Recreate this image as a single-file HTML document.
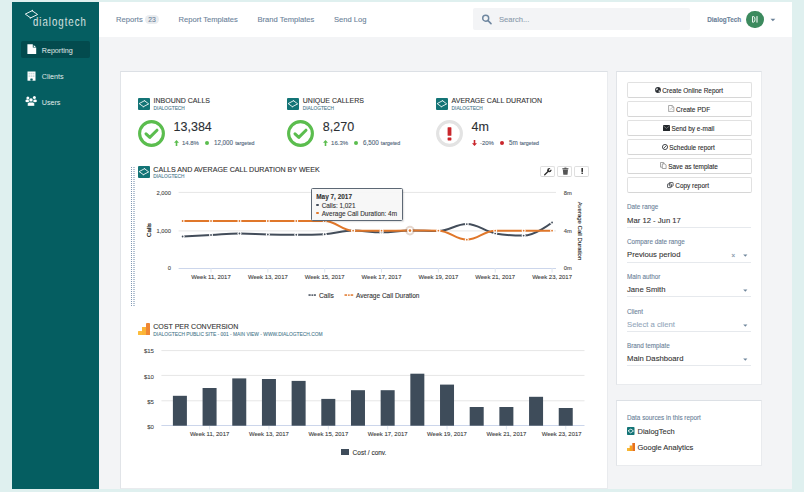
<!DOCTYPE html>
<html><head><meta charset="utf-8"><style>
html,body{margin:0;padding:0;}
body{width:804px;height:492px;overflow:hidden;position:relative;background:#dff0ef;font-family:"Liberation Sans", sans-serif;}
.t{position:absolute;white-space:nowrap;line-height:1;-webkit-text-stroke:0.1px currentColor;}
.r{position:absolute;}
</style></head><body>
<div class="r" style="left:12px;top:2px;width:780px;height:487px;background:#f3f4f6;"></div><div class="r" style="left:12px;top:2px;width:87px;height:487px;background:#055e61;"></div><svg class="r" style="left:24px;top:8px;" width="16" height="12" viewBox="0 0 16 12"><path d="M1.3 6.1 L8.1 2.7 L13.6 6.5 L6.6 9.9 Z" fill="none" stroke="#fff" stroke-width="0.9" stroke-linejoin="round"/><path d="M7.4 3.1 L8.9 1.5 L9.0 3.3 Z M7.3 9.5 L5.9 11 L5.8 9.3 Z" fill="#fff"/></svg><div class="t" style="left:33.4px;top:15.6px;font-size:12.3px;color:#fff;letter-spacing:1.3px;-webkit-text-stroke:0.2px #055e61;transform:scaleX(0.78);transform-origin:0 0;">dialogtech</div><div class="r" style="left:21px;top:41px;width:69px;height:17px;background:#034b4e;border-radius:2px;"></div><svg class="r" style="left:26.5px;top:44px;" width="10" height="11" viewBox="0 0 10 11"><path d="M0.4 0.3 H5.8 V3.6 H9.2 V10.1 H0.4 Z" fill="#fff"/><path d="M6.7 0.9 L8.8 3.0 H6.7 Z" fill="#fff"/></svg><div class="t" style="left:41.70px;top:47.00px;font-size:7.2px;color:#fff;font-weight:normal;-webkit-text-stroke:0.12px #055e61;">Reporting</div><svg class="r" style="left:27px;top:70.5px;" width="9" height="10" viewBox="0 0 9 10"><rect x="0.5" y="0.5" width="8" height="9.2" fill="#fff"/><rect x="1.6" y="1.8" width="1.6" height="1.6" fill="#055e61" opacity="0.22"/><rect x="3.7" y="1.8" width="1.6" height="1.6" fill="#055e61" opacity="0.22"/><rect x="5.8" y="1.8" width="1.6" height="1.6" fill="#055e61" opacity="0.22"/><rect x="1.6" y="4.3" width="1.6" height="1.6" fill="#055e61" opacity="0.22"/><rect x="3.7" y="4.3" width="1.6" height="1.6" fill="#055e61" opacity="0.22"/><rect x="5.8" y="4.3" width="1.6" height="1.6" fill="#055e61" opacity="0.22"/><rect x="3.3" y="7.4" width="2.4" height="2.3" rx="0.6" fill="#055e61"/></svg><div class="t" style="left:41.70px;top:73.00px;font-size:7.2px;color:#fff;font-weight:normal;-webkit-text-stroke:0.12px #055e61;">Clients</div><svg class="r" style="left:24px;top:95px;" width="14" height="12" viewBox="0 0 14 12"><circle cx="3.9" cy="2.9" r="1.5" fill="#fff"/><circle cx="10.4" cy="2.6" r="1.5" fill="#fff"/><ellipse cx="3.3" cy="5.9" rx="1.9" ry="1.4" fill="#fff"/><ellipse cx="11.0" cy="5.9" rx="1.9" ry="1.4" fill="#fff"/><circle cx="7.0" cy="4.9" r="2.0" fill="#fff" stroke="#055e61" stroke-width="0.5"/><path d="M3.6 11.1 V8.7 Q3.6 7.2 5.2 7.2 H8.8 Q10.4 7.2 10.4 8.7 V11.1 Z" fill="#fff" stroke="#055e61" stroke-width="0.4"/></svg><div class="t" style="left:41.70px;top:99.00px;font-size:7.2px;color:#fff;font-weight:normal;-webkit-text-stroke:0.12px #055e61;">Users</div><div class="r" style="left:99px;top:2px;width:693px;height:35px;background:#fff;"></div><div class="t" style="left:116.10px;top:16.00px;font-size:7.6px;color:#6b8299;font-weight:normal;">Reports</div><div class="r" style="left:144.8px;top:15.3px;width:14.2px;height:9.2px;background:#e9ecef;border-radius:5px;"></div><div class="t" style="left:142.00px;width:20px;text-align:center;top:17.00px;font-size:6.8px;color:#6b8299;font-weight:normal;">23</div><div class="t" style="left:178.50px;top:16.00px;font-size:7.6px;color:#6b8299;font-weight:normal;">Report Templates</div><div class="t" style="left:257.50px;top:16.00px;font-size:7.6px;color:#6b8299;font-weight:normal;">Brand Templates</div><div class="t" style="left:334.00px;top:16.00px;font-size:7.6px;color:#6b8299;font-weight:normal;">Send Log</div><div class="r" style="left:473px;top:8px;width:217px;height:22px;background:#f3f4f6;border-radius:2px;"></div><svg class="r" style="left:481px;top:14px;" width="12" height="11" viewBox="0 0 12 11"><circle cx="4.7" cy="4.2" r="3.0" fill="none" stroke="#6f87a0" stroke-width="1.45"/><path d="M7.0 6.6 L10.0 9.6" stroke="#6f87a0" stroke-width="1.6" stroke-linecap="round"/></svg><div class="t" style="left:498.90px;top:16.00px;font-size:7.6px;color:#8a9bac;font-weight:normal;">Search...</div><div class="t" style="left:707.20px;top:17.00px;font-size:6.4px;color:#6b8299;font-weight:bold;">DialogTech</div><div class="r" style="left:746.3px;top:10.5px;width:17.6px;height:17.6px;background:#3c8a5e;border-radius:50%;"></div><svg class="r" style="left:750px;top:14px;" width="10" height="10" viewBox="0 0 10 10"><path d="M2.55 2.5 V8.2 H3.4 Q5.0 8.2 5.0 5.35 Q5.0 2.5 3.4 2.5 Z" fill="none" stroke="#fff" stroke-width="0.95"/><rect x="6.3" y="2.1" width="1.4" height="6.5" fill="#fff" opacity="0.75"/></svg><svg class="r" style="left:769.5px;top:17.5px;" width="6" height="4" viewBox="0 0 6 4"><path d="M0.5 0.8 H5.3 L2.9 3.3 Z" fill="#6b8299"/></svg><div class="r" style="left:120px;top:71px;width:488px;height:418px;background:#fff;border:1px solid #e9ebee;border-top-color:#dce0e5;border-left-color:#e1e4e8;box-sizing:border-box;"></div><svg class="r" style="left:138px;top:98px;" width="12" height="12" viewBox="0 0 12 12"><rect x="0" y="0" width="12" height="12" rx="1" fill="#137476"/><path d="M1.15 5.6 L6.5 2.7 L10.7 5.9 L5.4 8.7 Z" fill="none" stroke="#fff" stroke-width="0.85" stroke-linejoin="round"/><path d="M5.9 2.2 L7.3 2.4 L6.6 3.4 Z M4.7 9.3 L6.1 9.1 L5.3 8.2 Z" fill="#fff"/></svg><div class="t" style="left:153.60px;top:97.00px;font-size:7px;color:#333;font-weight:normal;">INBOUND CALLS</div><div class="t" style="left:153.60px;top:107.00px;font-size:4.8px;color:#4f7d91;font-weight:normal;">DIALOGTECH</div><svg class="r" style="left:138px;top:119.9px;" width="27" height="27" viewBox="0 0 27 27"><circle cx="13.5" cy="13.5" r="11.9" fill="none" stroke="#5bbd4e" stroke-width="3.1"/><path d="M8 13.8 L11.8 17.4 L19 10.2" fill="none" stroke="#5bbd4e" stroke-width="3" stroke-linecap="round" stroke-linejoin="round"/></svg><svg class="r" style="left:174.2px;top:140.2px;" width="5" height="6" viewBox="0 0 5 6"><path d="M2.5 0 L5 2.8 H3.3 V6 H1.7 V2.8 H0 Z" fill="#5bbd4e"/></svg><div class="t" style="left:173.60px;top:121.00px;font-size:12.5px;color:#2b2f33;font-weight:normal;">13,384</div><div class="t" style="left:181.90px;top:140.00px;font-size:6px;color:#4f6579;font-weight:normal;">14.8%</div><div class="r" style="left:205.1140625px;top:141.1px;width:4px;height:4px;background:#5bbd4e;border-radius:50%;"></div><div class="t" style="left:213.91px;top:140.00px;font-size:6.28px;color:#4f6579;font-weight:normal;">12,000</div><div class="t" style="left:235.13px;top:141.00px;font-size:5.3px;color:#4f6579;font-weight:normal;">targeted</div><svg class="r" style="left:287.2px;top:98px;" width="12" height="12" viewBox="0 0 12 12"><rect x="0" y="0" width="12" height="12" rx="1" fill="#137476"/><path d="M1.15 5.6 L6.5 2.7 L10.7 5.9 L5.4 8.7 Z" fill="none" stroke="#fff" stroke-width="0.85" stroke-linejoin="round"/><path d="M5.9 2.2 L7.3 2.4 L6.6 3.4 Z M4.7 9.3 L6.1 9.1 L5.3 8.2 Z" fill="#fff"/></svg><div class="t" style="left:302.80px;top:97.00px;font-size:7px;color:#333;font-weight:normal;">UNIQUE CALLERS</div><div class="t" style="left:302.80px;top:107.00px;font-size:4.8px;color:#4f7d91;font-weight:normal;">DIALOGTECH</div><svg class="r" style="left:287.2px;top:119.9px;" width="27" height="27" viewBox="0 0 27 27"><circle cx="13.5" cy="13.5" r="11.9" fill="none" stroke="#5bbd4e" stroke-width="3.1"/><path d="M8 13.8 L11.8 17.4 L19 10.2" fill="none" stroke="#5bbd4e" stroke-width="3" stroke-linecap="round" stroke-linejoin="round"/></svg><svg class="r" style="left:323.4px;top:140.2px;" width="5" height="6" viewBox="0 0 5 6"><path d="M2.5 0 L5 2.8 H3.3 V6 H1.7 V2.8 H0 Z" fill="#5bbd4e"/></svg><div class="t" style="left:322.80px;top:121.00px;font-size:12.5px;color:#2b2f33;font-weight:normal;">8,270</div><div class="t" style="left:331.10px;top:140.00px;font-size:6px;color:#4f6579;font-weight:normal;">16.3%</div><div class="r" style="left:354.3140625px;top:141.1px;width:4px;height:4px;background:#5bbd4e;border-radius:50%;"></div><div class="t" style="left:363.11px;top:140.00px;font-size:6.28px;color:#4f6579;font-weight:normal;">6,500</div><div class="t" style="left:380.83px;top:141.00px;font-size:5.3px;color:#4f6579;font-weight:normal;">targeted</div><svg class="r" style="left:436px;top:98px;" width="12" height="12" viewBox="0 0 12 12"><rect x="0" y="0" width="12" height="12" rx="1" fill="#137476"/><path d="M1.15 5.6 L6.5 2.7 L10.7 5.9 L5.4 8.7 Z" fill="none" stroke="#fff" stroke-width="0.85" stroke-linejoin="round"/><path d="M5.9 2.2 L7.3 2.4 L6.6 3.4 Z M4.7 9.3 L6.1 9.1 L5.3 8.2 Z" fill="#fff"/></svg><div class="t" style="left:451.60px;top:97.00px;font-size:7px;color:#333;font-weight:normal;">AVERAGE CALL DURATION</div><div class="t" style="left:451.60px;top:107.00px;font-size:4.8px;color:#4f7d91;font-weight:normal;">DIALOGTECH</div><svg class="r" style="left:436px;top:119.9px;" width="27" height="27" viewBox="0 0 27 27"><circle cx="13.5" cy="13.5" r="11.9" fill="none" stroke="#e3e3e3" stroke-width="3.1"/><rect x="11.6" y="7.2" width="3.8" height="8.6" rx="0.6" fill="#c9262c"/><rect x="11.6" y="17.4" width="3.8" height="3" rx="0.6" fill="#c9262c"/></svg><svg class="r" style="left:472.2px;top:140.2px;" width="5" height="6" viewBox="0 0 5 6"><path d="M2.5 6 L5 3.2 H3.3 V0 H1.7 V3.2 H0 Z" fill="#c9262c"/></svg><div class="t" style="left:471.60px;top:121.00px;font-size:12.5px;color:#2b2f33;font-weight:normal;">4m</div><div class="t" style="left:479.90px;top:140.00px;font-size:6px;color:#4f6579;font-weight:normal;">-20%</div><div class="r" style="left:500.10781249999997px;top:141.1px;width:4px;height:4px;background:#c9262c;border-radius:50%;"></div><div class="t" style="left:508.91px;top:140.00px;font-size:6.28px;color:#4f6579;font-weight:normal;">5m</div><div class="t" style="left:519.63px;top:141.00px;font-size:5.3px;color:#4f6579;font-weight:normal;">targeted</div><svg class="r" style="left:131px;top:167px;" width="5" height="141" viewBox="0 0 5 141"><rect x="0" y="0" width="1" height="1" fill="#8098b3"/><rect x="2" y="0" width="2" height="1" fill="#b4c3d3"/><rect x="0" y="2" width="1" height="1" fill="#8098b3"/><rect x="2" y="2" width="2" height="1" fill="#b4c3d3"/><rect x="0" y="4" width="1" height="1" fill="#8098b3"/><rect x="2" y="4" width="2" height="1" fill="#b4c3d3"/><rect x="0" y="6" width="1" height="1" fill="#8098b3"/><rect x="2" y="6" width="2" height="1" fill="#b4c3d3"/><rect x="0" y="8" width="1" height="1" fill="#8098b3"/><rect x="2" y="8" width="2" height="1" fill="#b4c3d3"/><rect x="0" y="10" width="1" height="1" fill="#8098b3"/><rect x="2" y="10" width="2" height="1" fill="#b4c3d3"/><rect x="0" y="12" width="1" height="1" fill="#8098b3"/><rect x="2" y="12" width="2" height="1" fill="#b4c3d3"/><rect x="0" y="14" width="1" height="1" fill="#8098b3"/><rect x="2" y="14" width="2" height="1" fill="#b4c3d3"/><rect x="0" y="16" width="1" height="1" fill="#8098b3"/><rect x="2" y="16" width="2" height="1" fill="#b4c3d3"/><rect x="0" y="18" width="1" height="1" fill="#8098b3"/><rect x="2" y="18" width="2" height="1" fill="#b4c3d3"/><rect x="0" y="20" width="1" height="1" fill="#8098b3"/><rect x="2" y="20" width="2" height="1" fill="#b4c3d3"/><rect x="0" y="22" width="1" height="1" fill="#8098b3"/><rect x="2" y="22" width="2" height="1" fill="#b4c3d3"/><rect x="0" y="24" width="1" height="1" fill="#8098b3"/><rect x="2" y="24" width="2" height="1" fill="#b4c3d3"/><rect x="0" y="26" width="1" height="1" fill="#8098b3"/><rect x="2" y="26" width="2" height="1" fill="#b4c3d3"/><rect x="0" y="28" width="1" height="1" fill="#8098b3"/><rect x="2" y="28" width="2" height="1" fill="#b4c3d3"/><rect x="0" y="30" width="1" height="1" fill="#8098b3"/><rect x="2" y="30" width="2" height="1" fill="#b4c3d3"/><rect x="0" y="32" width="1" height="1" fill="#8098b3"/><rect x="2" y="32" width="2" height="1" fill="#b4c3d3"/><rect x="0" y="34" width="1" height="1" fill="#8098b3"/><rect x="2" y="34" width="2" height="1" fill="#b4c3d3"/><rect x="0" y="36" width="1" height="1" fill="#8098b3"/><rect x="2" y="36" width="2" height="1" fill="#b4c3d3"/><rect x="0" y="38" width="1" height="1" fill="#8098b3"/><rect x="2" y="38" width="2" height="1" fill="#b4c3d3"/><rect x="0" y="40" width="1" height="1" fill="#8098b3"/><rect x="2" y="40" width="2" height="1" fill="#b4c3d3"/><rect x="0" y="42" width="1" height="1" fill="#8098b3"/><rect x="2" y="42" width="2" height="1" fill="#b4c3d3"/><rect x="0" y="44" width="1" height="1" fill="#8098b3"/><rect x="2" y="44" width="2" height="1" fill="#b4c3d3"/><rect x="0" y="46" width="1" height="1" fill="#8098b3"/><rect x="2" y="46" width="2" height="1" fill="#b4c3d3"/><rect x="0" y="48" width="1" height="1" fill="#8098b3"/><rect x="2" y="48" width="2" height="1" fill="#b4c3d3"/><rect x="0" y="50" width="1" height="1" fill="#8098b3"/><rect x="2" y="50" width="2" height="1" fill="#b4c3d3"/><rect x="0" y="52" width="1" height="1" fill="#8098b3"/><rect x="2" y="52" width="2" height="1" fill="#b4c3d3"/><rect x="0" y="54" width="1" height="1" fill="#8098b3"/><rect x="2" y="54" width="2" height="1" fill="#b4c3d3"/><rect x="0" y="56" width="1" height="1" fill="#8098b3"/><rect x="2" y="56" width="2" height="1" fill="#b4c3d3"/><rect x="0" y="58" width="1" height="1" fill="#8098b3"/><rect x="2" y="58" width="2" height="1" fill="#b4c3d3"/><rect x="0" y="60" width="1" height="1" fill="#8098b3"/><rect x="2" y="60" width="2" height="1" fill="#b4c3d3"/><rect x="0" y="62" width="1" height="1" fill="#8098b3"/><rect x="2" y="62" width="2" height="1" fill="#b4c3d3"/><rect x="0" y="64" width="1" height="1" fill="#8098b3"/><rect x="2" y="64" width="2" height="1" fill="#b4c3d3"/><rect x="0" y="66" width="1" height="1" fill="#8098b3"/><rect x="2" y="66" width="2" height="1" fill="#b4c3d3"/><rect x="0" y="68" width="1" height="1" fill="#8098b3"/><rect x="2" y="68" width="2" height="1" fill="#b4c3d3"/><rect x="0" y="70" width="1" height="1" fill="#8098b3"/><rect x="2" y="70" width="2" height="1" fill="#b4c3d3"/><rect x="0" y="72" width="1" height="1" fill="#8098b3"/><rect x="2" y="72" width="2" height="1" fill="#b4c3d3"/><rect x="0" y="74" width="1" height="1" fill="#8098b3"/><rect x="2" y="74" width="2" height="1" fill="#b4c3d3"/><rect x="0" y="76" width="1" height="1" fill="#8098b3"/><rect x="2" y="76" width="2" height="1" fill="#b4c3d3"/><rect x="0" y="78" width="1" height="1" fill="#8098b3"/><rect x="2" y="78" width="2" height="1" fill="#b4c3d3"/><rect x="0" y="80" width="1" height="1" fill="#8098b3"/><rect x="2" y="80" width="2" height="1" fill="#b4c3d3"/><rect x="0" y="82" width="1" height="1" fill="#8098b3"/><rect x="2" y="82" width="2" height="1" fill="#b4c3d3"/><rect x="0" y="84" width="1" height="1" fill="#8098b3"/><rect x="2" y="84" width="2" height="1" fill="#b4c3d3"/><rect x="0" y="86" width="1" height="1" fill="#8098b3"/><rect x="2" y="86" width="2" height="1" fill="#b4c3d3"/><rect x="0" y="88" width="1" height="1" fill="#8098b3"/><rect x="2" y="88" width="2" height="1" fill="#b4c3d3"/><rect x="0" y="90" width="1" height="1" fill="#8098b3"/><rect x="2" y="90" width="2" height="1" fill="#b4c3d3"/><rect x="0" y="92" width="1" height="1" fill="#8098b3"/><rect x="2" y="92" width="2" height="1" fill="#b4c3d3"/><rect x="0" y="94" width="1" height="1" fill="#8098b3"/><rect x="2" y="94" width="2" height="1" fill="#b4c3d3"/><rect x="0" y="96" width="1" height="1" fill="#8098b3"/><rect x="2" y="96" width="2" height="1" fill="#b4c3d3"/><rect x="0" y="98" width="1" height="1" fill="#8098b3"/><rect x="2" y="98" width="2" height="1" fill="#b4c3d3"/><rect x="0" y="100" width="1" height="1" fill="#8098b3"/><rect x="2" y="100" width="2" height="1" fill="#b4c3d3"/><rect x="0" y="102" width="1" height="1" fill="#8098b3"/><rect x="2" y="102" width="2" height="1" fill="#b4c3d3"/><rect x="0" y="104" width="1" height="1" fill="#8098b3"/><rect x="2" y="104" width="2" height="1" fill="#b4c3d3"/><rect x="0" y="106" width="1" height="1" fill="#8098b3"/><rect x="2" y="106" width="2" height="1" fill="#b4c3d3"/><rect x="0" y="108" width="1" height="1" fill="#8098b3"/><rect x="2" y="108" width="2" height="1" fill="#b4c3d3"/><rect x="0" y="110" width="1" height="1" fill="#8098b3"/><rect x="2" y="110" width="2" height="1" fill="#b4c3d3"/><rect x="0" y="112" width="1" height="1" fill="#8098b3"/><rect x="2" y="112" width="2" height="1" fill="#b4c3d3"/><rect x="0" y="114" width="1" height="1" fill="#8098b3"/><rect x="2" y="114" width="2" height="1" fill="#b4c3d3"/><rect x="0" y="116" width="1" height="1" fill="#8098b3"/><rect x="2" y="116" width="2" height="1" fill="#b4c3d3"/><rect x="0" y="118" width="1" height="1" fill="#8098b3"/><rect x="2" y="118" width="2" height="1" fill="#b4c3d3"/><rect x="0" y="120" width="1" height="1" fill="#8098b3"/><rect x="2" y="120" width="2" height="1" fill="#b4c3d3"/><rect x="0" y="122" width="1" height="1" fill="#8098b3"/><rect x="2" y="122" width="2" height="1" fill="#b4c3d3"/><rect x="0" y="124" width="1" height="1" fill="#8098b3"/><rect x="2" y="124" width="2" height="1" fill="#b4c3d3"/><rect x="0" y="126" width="1" height="1" fill="#8098b3"/><rect x="2" y="126" width="2" height="1" fill="#b4c3d3"/><rect x="0" y="128" width="1" height="1" fill="#8098b3"/><rect x="2" y="128" width="2" height="1" fill="#b4c3d3"/><rect x="0" y="130" width="1" height="1" fill="#8098b3"/><rect x="2" y="130" width="2" height="1" fill="#b4c3d3"/><rect x="0" y="132" width="1" height="1" fill="#8098b3"/><rect x="2" y="132" width="2" height="1" fill="#b4c3d3"/><rect x="0" y="134" width="1" height="1" fill="#8098b3"/><rect x="2" y="134" width="2" height="1" fill="#b4c3d3"/><rect x="0" y="136" width="1" height="1" fill="#8098b3"/><rect x="2" y="136" width="2" height="1" fill="#b4c3d3"/><rect x="0" y="138" width="1" height="1" fill="#8098b3"/><rect x="2" y="138" width="2" height="1" fill="#b4c3d3"/></svg><svg class="r" style="left:138.2px;top:166px;" width="12" height="12" viewBox="0 0 12 12"><rect x="0" y="0" width="12" height="12" rx="1" fill="#137476"/><path d="M1.15 5.6 L6.5 2.7 L10.7 5.9 L5.4 8.7 Z" fill="none" stroke="#fff" stroke-width="0.85" stroke-linejoin="round"/><path d="M5.9 2.2 L7.3 2.4 L6.6 3.4 Z M4.7 9.3 L6.1 9.1 L5.3 8.2 Z" fill="#fff"/></svg><div class="t" style="left:153.30px;top:167.00px;font-size:7.1px;color:#333;font-weight:normal;">CALLS AND AVERAGE CALL DURATION BY WEEK</div><div class="t" style="left:153.30px;top:175.00px;font-size:4.8px;color:#4f7d91;font-weight:normal;">DIALOGTECH</div><div class="r" style="left:540px;top:166px;width:15px;height:11px;background:#fff;border:1px solid #e0e0e0;border-bottom-color:#d8d8d8;border-radius:2px;box-sizing:border-box;"></div><div class="r" style="left:557px;top:166px;width:15px;height:11px;background:#fff;border:1px solid #e0e0e0;border-bottom-color:#d8d8d8;border-radius:2px;box-sizing:border-box;"></div><div class="r" style="left:574px;top:166px;width:15px;height:11px;background:#fff;border:1px solid #e0e0e0;border-bottom-color:#d8d8d8;border-radius:2px;box-sizing:border-box;"></div><svg class="r" style="left:543px;top:167px;" width="10" height="9" viewBox="0 0 10 9"><path d="M1.7 7.8 L5.3 4.2" stroke="#2e2e2e" stroke-width="1.3" stroke-linecap="round"/><circle cx="6.3" cy="3.2" r="2.1" fill="#2e2e2e"/><path d="M6.5 3.0 L8.9 0.6" stroke="#fff" stroke-width="1.3" stroke-linecap="round"/></svg><svg class="r" style="left:560.5px;top:167px;" width="9" height="9" viewBox="0 0 9 9"><rect x="1.3" y="1.2" width="6.2" height="1.1" rx="0.4" fill="#444"/><rect x="3.4" y="0.6" width="2" height="0.9" fill="#444"/><path d="M1.8 2.6 H7.0 L6.5 7.7 H2.3 Z" fill="#555"/></svg><svg class="r" style="left:578px;top:167px;" width="9" height="9" viewBox="0 0 9 9"><rect x="3.4" y="1.0" width="1.6" height="3.9" fill="#333"/><rect x="3.4" y="5.6" width="1.6" height="1.3" fill="#333"/></svg><svg class="r" style="left:0;top:0" width="804" height="492"><rect x="178.6" y="191.9" width="377.4" height="1" fill="#e6e6e6"/><rect x="178.6" y="230.4" width="377.4" height="1" fill="#e6e6e6"/><rect x="178.6" y="268" width="377.4" height="1" fill="#ccd6eb"/><rect x="210.52" y="268" width="1" height="4.5" fill="#dde5ef"/><rect x="267.36" y="268" width="1" height="4.5" fill="#dde5ef"/><rect x="324.20" y="268" width="1" height="4.5" fill="#dde5ef"/><rect x="381.04" y="268" width="1" height="4.5" fill="#dde5ef"/><rect x="437.88" y="268" width="1" height="4.5" fill="#dde5ef"/><rect x="494.72" y="268" width="1" height="4.5" fill="#dde5ef"/><rect x="551.56" y="268" width="1" height="4.5" fill="#dde5ef"/><path d="M 182.60 236.50 C 182.60 236.50 199.65 235.60 211.02 235.00 C 222.39 234.40 228.07 233.50 239.44 233.50 C 250.81 233.50 256.49 234.25 267.86 234.50 C 279.23 234.75 284.91 234.75 296.28 234.75 C 307.65 234.75 313.33 234.75 324.70 234.25 C 336.07 233.75 341.75 230.50 353.12 230.50 C 364.49 230.50 370.17 232.30 381.54 232.30 C 392.91 232.30 398.59 230.50 409.96 230.50 C 421.33 230.50 427.01 231.00 438.38 231.00 C 449.75 231.00 455.43 224.10 466.80 224.10 C 478.17 224.10 483.85 231.20 495.22 233.40 C 506.59 235.60 512.27 235.60 523.64 235.60 C 535.01 235.60 552.06 222.50 552.06 222.50" fill="none" stroke="#434d5a" stroke-width="2"/><path d="M 182.60 221.00 C 182.60 221.00 199.65 221.00 211.02 221.00 C 222.39 221.00 228.07 221.00 239.44 221.00 C 250.81 221.00 256.49 221.00 267.86 221.00 C 279.23 221.00 284.91 221.00 296.28 221.00 C 307.65 221.00 313.33 221.00 324.70 221.00 C 336.07 221.00 341.75 230.70 353.12 230.70 C 364.49 230.70 370.17 230.70 381.54 230.70 C 392.91 230.70 398.59 230.60 409.96 230.60 C 421.33 230.60 427.01 230.60 438.38 230.70 C 449.75 230.80 455.43 239.70 466.80 239.70 C 478.17 239.70 483.85 230.70 495.22 230.70 C 506.59 230.70 512.27 230.70 523.64 230.70 C 535.01 230.70 552.06 230.70 552.06 230.70" fill="none" stroke="#e0772a" stroke-width="2"/><circle cx="182.60" cy="236.50" r="2" fill="#fff"/><circle cx="182.60" cy="236.50" r="0.9" fill="#434d5a"/><circle cx="211.02" cy="235.00" r="2" fill="#fff"/><circle cx="211.02" cy="235.00" r="0.9" fill="#434d5a"/><circle cx="239.44" cy="233.50" r="2" fill="#fff"/><circle cx="239.44" cy="233.50" r="0.9" fill="#434d5a"/><circle cx="267.86" cy="234.50" r="2" fill="#fff"/><circle cx="267.86" cy="234.50" r="0.9" fill="#434d5a"/><circle cx="296.28" cy="234.75" r="2" fill="#fff"/><circle cx="296.28" cy="234.75" r="0.9" fill="#434d5a"/><circle cx="324.70" cy="234.25" r="2" fill="#fff"/><circle cx="324.70" cy="234.25" r="0.9" fill="#434d5a"/><circle cx="353.12" cy="230.50" r="2" fill="#fff"/><circle cx="353.12" cy="230.50" r="0.9" fill="#434d5a"/><circle cx="381.54" cy="232.30" r="2" fill="#fff"/><circle cx="381.54" cy="232.30" r="0.9" fill="#434d5a"/><circle cx="409.96" cy="230.50" r="2" fill="#fff"/><circle cx="409.96" cy="230.50" r="0.9" fill="#434d5a"/><circle cx="438.38" cy="231.00" r="2" fill="#fff"/><circle cx="438.38" cy="231.00" r="0.9" fill="#434d5a"/><circle cx="466.80" cy="224.10" r="2" fill="#fff"/><circle cx="466.80" cy="224.10" r="0.9" fill="#434d5a"/><circle cx="495.22" cy="233.40" r="2" fill="#fff"/><circle cx="495.22" cy="233.40" r="0.9" fill="#434d5a"/><circle cx="523.64" cy="235.60" r="2" fill="#fff"/><circle cx="523.64" cy="235.60" r="0.9" fill="#434d5a"/><circle cx="552.06" cy="222.50" r="2" fill="#fff"/><circle cx="552.06" cy="222.50" r="0.9" fill="#434d5a"/><circle cx="182.60" cy="221.00" r="2" fill="#fff"/><circle cx="182.60" cy="221.00" r="0.9" fill="#e0772a"/><circle cx="211.02" cy="221.00" r="2" fill="#fff"/><circle cx="211.02" cy="221.00" r="0.9" fill="#e0772a"/><circle cx="239.44" cy="221.00" r="2" fill="#fff"/><circle cx="239.44" cy="221.00" r="0.9" fill="#e0772a"/><circle cx="267.86" cy="221.00" r="2" fill="#fff"/><circle cx="267.86" cy="221.00" r="0.9" fill="#e0772a"/><circle cx="296.28" cy="221.00" r="2" fill="#fff"/><circle cx="296.28" cy="221.00" r="0.9" fill="#e0772a"/><circle cx="324.70" cy="221.00" r="2" fill="#fff"/><circle cx="324.70" cy="221.00" r="0.9" fill="#e0772a"/><circle cx="353.12" cy="230.70" r="2" fill="#fff"/><circle cx="353.12" cy="230.70" r="0.9" fill="#e0772a"/><circle cx="381.54" cy="230.70" r="2" fill="#fff"/><circle cx="381.54" cy="230.70" r="0.9" fill="#e0772a"/><circle cx="409.96" cy="230.60" r="2" fill="#fff"/><circle cx="409.96" cy="230.60" r="0.9" fill="#e0772a"/><circle cx="438.38" cy="230.70" r="2" fill="#fff"/><circle cx="438.38" cy="230.70" r="0.9" fill="#e0772a"/><circle cx="466.80" cy="239.70" r="2" fill="#fff"/><circle cx="466.80" cy="239.70" r="0.9" fill="#e0772a"/><circle cx="495.22" cy="230.70" r="2" fill="#fff"/><circle cx="495.22" cy="230.70" r="0.9" fill="#e0772a"/><circle cx="523.64" cy="230.70" r="2" fill="#fff"/><circle cx="523.64" cy="230.70" r="0.9" fill="#e0772a"/><circle cx="552.06" cy="230.70" r="2" fill="#fff"/><circle cx="552.06" cy="230.70" r="0.9" fill="#e0772a"/><circle cx="409.96" cy="230.6" r="4.8" fill="#a07050" opacity="0.28"/><circle cx="409.96" cy="230.6" r="2.8" fill="#fff"/><circle cx="409.96" cy="230.6" r="1.3" fill="#e0772a"/></svg><div class="t" style="left:131.00px;width:40px;text-align:right;top:191.00px;font-size:5.8px;color:#4a4a4a;font-weight:normal;">2,000</div><div class="t" style="left:131.00px;width:40px;text-align:right;top:229.00px;font-size:5.8px;color:#4a4a4a;font-weight:normal;">1,000</div><div class="t" style="left:131.00px;width:40px;text-align:right;top:266.00px;font-size:5.8px;color:#4a4a4a;font-weight:normal;">0</div><div class="t" style="left:563.70px;top:191.00px;font-size:5.8px;color:#4a4a4a;font-weight:normal;">8m</div><div class="t" style="left:563.70px;top:229.00px;font-size:5.8px;color:#4a4a4a;font-weight:normal;">4m</div><div class="t" style="left:563.70px;top:266.00px;font-size:5.8px;color:#4a4a4a;font-weight:normal;">0m</div><div class="t" style="left:119.6px;top:226.3px;width:60px;text-align:center;font-size:6.2px;color:#222;-webkit-text-stroke:0.2px #222;transform:rotate(-90deg);transform-origin:30px 4px;">Calls</div><div class="t" style="left:548.6px;top:226.5px;width:60px;text-align:center;font-size:6px;color:#222;transform:rotate(90deg);transform-origin:30px 4px;">Average Call Duration</div><div class="t" style="left:171.02px;width:80px;text-align:center;top:275.00px;font-size:5.95px;color:#3d3d3d;font-weight:normal;">Week 11, 2017</div><div class="t" style="left:227.86px;width:80px;text-align:center;top:275.00px;font-size:5.95px;color:#3d3d3d;font-weight:normal;">Week 13, 2017</div><div class="t" style="left:284.70px;width:80px;text-align:center;top:275.00px;font-size:5.95px;color:#3d3d3d;font-weight:normal;">Week 15, 2017</div><div class="t" style="left:341.54px;width:80px;text-align:center;top:275.00px;font-size:5.95px;color:#3d3d3d;font-weight:normal;">Week 17, 2017</div><div class="t" style="left:398.38px;width:80px;text-align:center;top:275.00px;font-size:5.95px;color:#3d3d3d;font-weight:normal;">Week 19, 2017</div><div class="t" style="left:455.22px;width:80px;text-align:center;top:275.00px;font-size:5.95px;color:#3d3d3d;font-weight:normal;">Week 21, 2017</div><div class="t" style="left:512.06px;width:80px;text-align:center;top:275.00px;font-size:5.95px;color:#3d3d3d;font-weight:normal;">Week 23, 2017</div><div class="r" style="left:311px;top:188px;width:92px;height:33px;background:rgba(247,247,247,0.95);border:1px solid #5d6875;border-radius:1.5px;box-sizing:border-box;box-shadow:1px 1px 1.5px rgba(0,0,0,0.12);"></div><div class="t" style="left:316.20px;top:194.00px;font-size:6.45px;color:#333;font-weight:bold;">May 7, 2017</div><div class="r" style="left:316.4px;top:203.6px;width:2.6px;height:2.6px;background:#434d5a;border-radius:50%;"></div><div class="t" style="left:321.70px;top:203.00px;font-size:6.4px;color:#333;font-weight:normal;">Calls: 1,021</div><div class="r" style="left:316.4px;top:211.8px;width:2.6px;height:2.6px;background:#e0772a;border-radius:50%;"></div><div class="t" style="left:321.70px;top:211.00px;font-size:6.45px;color:#333;font-weight:normal;">Average Call Duration: 4m</div><svg class="r" style="left:307.5px;top:292px;" width="10" height="6" viewBox="0 0 10 6"><rect x="0.5" y="2.3" width="2.2" height="1.5" fill="#434d5a"/><circle cx="4.2" cy="3.05" r="0.9" fill="#434d5a"/><rect x="5.7" y="2.3" width="2.2" height="1.5" fill="#434d5a"/></svg><div class="t" style="left:319.00px;top:293.00px;font-size:6.7px;color:#333;font-weight:normal;">Calls</div><svg class="r" style="left:344px;top:292px;" width="12" height="6" viewBox="0 0 12 6"><rect x="0.5" y="2.3" width="2.6" height="1.5" fill="#e0772a"/><circle cx="4.9" cy="3.05" r="0.9" fill="#e0772a"/><rect x="6.6" y="2.3" width="2.6" height="1.5" fill="#e0772a"/></svg><div class="t" style="left:356.00px;top:293.00px;font-size:6.5px;color:#333;font-weight:normal;">Average Call Duration</div><svg class="r" style="left:138px;top:323px;" width="12" height="12" viewBox="0 0 12 12"><rect x="0" y="8" width="4.1" height="4" rx="0.5" fill="#fcbc3b"/><rect x="4" y="4" width="4.1" height="8" fill="#fbb437"/><path d="M8 12 V1 Q8 0.1 8.9 0.1 H11.1 Q12 0.1 12 1 V12 Z" fill="#ef8634"/></svg><div class="t" style="left:153.30px;top:323.00px;font-size:7.04px;color:#333;font-weight:normal;">COST PER CONVERSION</div><div class="t" style="left:153.30px;top:333.00px;font-size:4.88px;color:#4f7d91;font-weight:normal;">DIALOGTECH PUBLIC SITE - 001 - MAIN VIEW - WWW.DIALOGTECH.COM</div><svg class="r" style="left:0;top:0" width="804" height="492"><rect x="161.4" y="350.1" width="423.1" height="1" fill="#e6e6e6"/><rect x="161.4" y="374.9" width="423.1" height="1" fill="#e6e6e6"/><rect x="161.4" y="400.3" width="423.1" height="1" fill="#e6e6e6"/><rect x="161.4" y="425" width="423.1" height="1" fill="#ccd6eb"/><rect x="209.08" y="425" width="1" height="4.5" fill="#dde5ef"/><rect x="268.44" y="425" width="1" height="4.5" fill="#dde5ef"/><rect x="327.80" y="425" width="1" height="4.5" fill="#dde5ef"/><rect x="387.16" y="425" width="1" height="4.5" fill="#dde5ef"/><rect x="446.52" y="425" width="1" height="4.5" fill="#dde5ef"/><rect x="505.88" y="425" width="1" height="4.5" fill="#dde5ef"/><rect x="565.24" y="425" width="1" height="4.5" fill="#dde5ef"/><rect x="172.90" y="395.8" width="14" height="29.90" fill="#3e4c5a"/><rect x="202.58" y="388.0" width="14" height="37.70" fill="#3e4c5a"/><rect x="232.26" y="378.4" width="14" height="47.30" fill="#3e4c5a"/><rect x="261.94" y="379.0" width="14" height="46.70" fill="#3e4c5a"/><rect x="291.62" y="380.9" width="14" height="44.80" fill="#3e4c5a"/><rect x="321.30" y="398.9" width="14" height="26.80" fill="#3e4c5a"/><rect x="350.98" y="390.2" width="14" height="35.50" fill="#3e4c5a"/><rect x="380.66" y="390.2" width="14" height="35.50" fill="#3e4c5a"/><rect x="410.34" y="373.7" width="14" height="52.00" fill="#3e4c5a"/><rect x="440.02" y="384.6" width="14" height="41.10" fill="#3e4c5a"/><rect x="469.70" y="407.0" width="14" height="18.70" fill="#3e4c5a"/><rect x="499.38" y="407.0" width="14" height="18.70" fill="#3e4c5a"/><rect x="529.06" y="396.8" width="14" height="28.90" fill="#3e4c5a"/><rect x="558.74" y="408.0" width="14" height="17.70" fill="#3e4c5a"/></svg><div class="t" style="left:113.90px;width:40px;text-align:right;top:348.00px;font-size:6.0px;color:#4a4a4a;font-weight:normal;">$15</div><div class="t" style="left:113.90px;width:40px;text-align:right;top:374.00px;font-size:6.0px;color:#4a4a4a;font-weight:normal;">$10</div><div class="t" style="left:113.90px;width:40px;text-align:right;top:399.00px;font-size:6.0px;color:#4a4a4a;font-weight:normal;">$5</div><div class="t" style="left:113.90px;width:40px;text-align:right;top:424.00px;font-size:6.0px;color:#4a4a4a;font-weight:normal;">$0</div><div class="t" style="left:169.58px;width:80px;text-align:center;top:432.00px;font-size:5.95px;color:#3d3d3d;font-weight:normal;">Week 11, 2017</div><div class="t" style="left:228.94px;width:80px;text-align:center;top:432.00px;font-size:5.95px;color:#3d3d3d;font-weight:normal;">Week 13, 2017</div><div class="t" style="left:288.30px;width:80px;text-align:center;top:432.00px;font-size:5.95px;color:#3d3d3d;font-weight:normal;">Week 15, 2017</div><div class="t" style="left:347.66px;width:80px;text-align:center;top:432.00px;font-size:5.95px;color:#3d3d3d;font-weight:normal;">Week 17, 2017</div><div class="t" style="left:407.02px;width:80px;text-align:center;top:432.00px;font-size:5.95px;color:#3d3d3d;font-weight:normal;">Week 19, 2017</div><div class="t" style="left:466.38px;width:80px;text-align:center;top:432.00px;font-size:5.95px;color:#3d3d3d;font-weight:normal;">Week 21, 2017</div><div class="t" style="left:501.60px;width:80px;text-align:right;top:432.00px;font-size:5.95px;color:#3d3d3d;font-weight:normal;">Week 23, 2017</div><div class="r" style="left:341.4px;top:449px;width:8.1px;height:6.2px;background:#3e4c5a;"></div><div class="t" style="left:352.60px;top:450.00px;font-size:6.5px;color:#333;font-weight:normal;">Cost / conv.</div><div class="r" style="left:616px;top:71px;width:146px;height:314px;background:#fff;border:1px solid #e9ebee;border-top-color:#dce0e5;border-left-color:#e1e4e8;box-sizing:border-box;"></div><div class="r" style="left:627px;top:82px;width:124.5px;height:16px;background:#fff;border:1px solid #e1e1e1;border-bottom-color:#d6d6d6;border-radius:2px;box-sizing:border-box;"></div><div class="t" style="left:662.20px;top:88.00px;font-size:6.45px;color:#2b2b2b;font-weight:normal;">Create Online Report</div><svg class="r" style="left:654.6px;top:86.9px;" width="7.5" height="7.5" viewBox="0 0 7.5 7.5"><circle cx="3" cy="3" r="2.9" fill="#2a2e33"/><path d="M1.0 1.9 Q2.0 0.9 3.0 1.4 Q3.2 2.4 2.2 3.0 Q1.4 3.0 1.2 3.6 Z M3.7 3.3 Q4.9 3.1 5.3 4.0 Q4.6 5.3 3.5 5.6 Q3.9 4.4 3.7 3.3 Z" fill="#fff" opacity="0.8"/></svg><div class="r" style="left:627px;top:101px;width:124.5px;height:16px;background:#fff;border:1px solid #e1e1e1;border-bottom-color:#d6d6d6;border-radius:2px;box-sizing:border-box;"></div><div class="t" style="left:676.10px;top:107.00px;font-size:6.45px;color:#2b2b2b;font-weight:normal;">Create PDF</div><svg class="r" style="left:668.2px;top:104.9px;" width="7.5" height="7.5" viewBox="0 0 7.5 7.5"><path d="M0.6 0.5 H4.2 L5.9 2.2 V6.6 H0.6 Z" fill="#fff" stroke="#8c8c8c" stroke-width="0.75"/><path d="M4.1 0.6 V2.3 H5.8" fill="none" stroke="#8c8c8c" stroke-width="0.6"/><path d="M1.8 5.3 Q3.0 2.6 3.3 3.0 Q3.6 3.8 4.7 5.1" fill="none" stroke="#a8a8a8" stroke-width="0.5"/></svg><div class="r" style="left:627px;top:120px;width:124.5px;height:16px;background:#fff;border:1px solid #e1e1e1;border-bottom-color:#d6d6d6;border-radius:2px;box-sizing:border-box;"></div><div class="t" style="left:671.40px;top:126.00px;font-size:6.45px;color:#2b2b2b;font-weight:normal;">Send by e-mail</div><svg class="r" style="left:662.9px;top:125.1px;" width="7.5" height="7.5" viewBox="0 0 7.5 7.5"><rect x="0" y="0" width="7" height="5.9" rx="0.5" fill="#23272b"/><path d="M0.3 0.8 L3.5 3.4 L6.7 0.8" fill="none" stroke="#fff" stroke-width="0.5" opacity="0.7"/></svg><div class="r" style="left:627px;top:139px;width:124.5px;height:16px;background:#fff;border:1px solid #e1e1e1;border-bottom-color:#d6d6d6;border-radius:2px;box-sizing:border-box;"></div><div class="t" style="left:669.30px;top:145.00px;font-size:6.45px;color:#2b2b2b;font-weight:normal;">Schedule report</div><svg class="r" style="left:662.0px;top:143.9px;" width="7.5" height="7.5" viewBox="0 0 7.5 7.5"><circle cx="3" cy="3" r="2.55" fill="none" stroke="#2a2e33" stroke-width="0.85"/><path d="M1.6 4.4 L4.4 1.6" stroke="#2a2e33" stroke-width="0.8"/></svg><div class="r" style="left:627px;top:158px;width:124.5px;height:16px;background:#fff;border:1px solid #e1e1e1;border-bottom-color:#d6d6d6;border-radius:2px;box-sizing:border-box;"></div><div class="t" style="left:668.20px;top:164.00px;font-size:6.45px;color:#2b2b2b;font-weight:normal;">Save as template</div><svg class="r" style="left:660.0px;top:162.1px;" width="7.5" height="7.5" viewBox="0 0 7.5 7.5"><path d="M0.5 0.5 H3.8 V5.2 H0.5 Z" fill="#fff" stroke="#8a8a8a" stroke-width="0.75"/><path d="M2.3 1.9 H5.0 L6.1 3.0 V6.5 H2.3 Z" fill="#fff" stroke="#8a8a8a" stroke-width="0.75"/></svg><div class="r" style="left:627px;top:177px;width:124.5px;height:16px;background:#fff;border:1px solid #e1e1e1;border-bottom-color:#d6d6d6;border-radius:2px;box-sizing:border-box;"></div><div class="t" style="left:675.30px;top:183.00px;font-size:6.45px;color:#2b2b2b;font-weight:normal;">Copy report</div><svg class="r" style="left:667.2px;top:181.9px;" width="7.5" height="7.5" viewBox="0 0 7.5 7.5"><rect x="0.45" y="1.9" width="3.9" height="3.7" rx="0.6" fill="#fff" stroke="#33373c" stroke-width="0.8"/><rect x="2.3" y="0.45" width="3.8" height="3.7" rx="0.6" fill="none" stroke="#33373c" stroke-width="0.8"/></svg><div class="r" style="left:616px;top:400px;width:146px;height:66px;background:#fff;border:1px solid #e9ebee;border-top-color:#dce0e5;border-left-color:#e1e4e8;box-sizing:border-box;"></div><div class="t" style="left:627.00px;top:415.00px;font-size:6.34px;color:#6b8299;font-weight:normal;">Data sources in this report</div><svg class="r" style="left:627px;top:427px;" width="7.5" height="8" viewBox="0 0 7.5 8"><rect x="0" y="0" width="7.5" height="8" rx="0.8" fill="#137476"/><path d="M1 3.8 L3.9 2 L6.5 4 L3.6 5.9 Z" fill="none" stroke="#fff" stroke-width="0.8"/></svg><div class="t" style="left:637.50px;top:428.00px;font-size:7.5px;color:#333;font-weight:normal;">DialogTech</div><svg class="r" style="left:627px;top:442.5px;" width="8" height="8" viewBox="0 0 8 8"><rect x="0" y="5" width="3" height="3" fill="#f7b733"/><rect x="2.7" y="2.5" width="2.7" height="5.5" fill="#f6a21d"/><rect x="5.3" y="0" width="2.7" height="8" fill="#e8711c"/></svg><div class="t" style="left:637.50px;top:444.00px;font-size:7.5px;color:#333;font-weight:normal;">Google Analytics</div><div class="t" style="left:627.00px;top:204.00px;font-size:6.3px;color:#6b8299;font-weight:normal;">Date range</div><div class="t" style="left:627.00px;top:217.00px;font-size:7.7px;color:#333;font-weight:normal;">Mar 12 - Jun 17</div><div class="r" style="left:627px;top:227px;width:124px;height:1px;background:#e6e9ed;"></div><div class="t" style="left:627.00px;top:239.00px;font-size:6.3px;color:#6b8299;font-weight:normal;">Compare date range</div><div class="t" style="left:627.00px;top:251.00px;font-size:7.7px;color:#333;font-weight:normal;">Previous period</div><div class="r" style="left:627px;top:262px;width:124px;height:1px;background:#e6e9ed;"></div><svg class="r" style="left:742.5px;top:254px;" width="5" height="3" viewBox="0 0 5 3"><path d="M0.2 0.6 H4.4 L2.3 2.8 Z" fill="#6f869c"/></svg><div class="t" style="left:728.30px;width:10px;text-align:center;top:252.00px;font-size:7px;color:#7f93a7;font-weight:normal;">×</div><div class="t" style="left:627.00px;top:274.00px;font-size:6.3px;color:#6b8299;font-weight:normal;">Main author</div><div class="t" style="left:627.00px;top:286.00px;font-size:7.7px;color:#333;font-weight:normal;">Jane Smith</div><div class="r" style="left:627px;top:296px;width:124px;height:1px;background:#e6e9ed;"></div><svg class="r" style="left:742.5px;top:289px;" width="5" height="3" viewBox="0 0 5 3"><path d="M0.2 0.6 H4.4 L2.3 2.8 Z" fill="#6f869c"/></svg><div class="t" style="left:627.00px;top:309.00px;font-size:6.3px;color:#6b8299;font-weight:normal;">Client</div><div class="t" style="left:627.00px;top:321.00px;font-size:7.7px;color:#93a7bb;font-weight:normal;">Select a client</div><div class="r" style="left:627px;top:331px;width:124px;height:1px;background:#e6e9ed;"></div><svg class="r" style="left:742.5px;top:324px;" width="5" height="3" viewBox="0 0 5 3"><path d="M0.2 0.6 H4.4 L2.3 2.8 Z" fill="#6f869c"/></svg><div class="t" style="left:627.00px;top:343.00px;font-size:6.3px;color:#6b8299;font-weight:normal;">Brand template</div><div class="t" style="left:627.00px;top:355.00px;font-size:7.7px;color:#333;font-weight:normal;">Main Dashboard</div><div class="r" style="left:627px;top:365px;width:124px;height:1px;background:#e6e9ed;"></div><svg class="r" style="left:742.5px;top:358px;" width="5" height="3" viewBox="0 0 5 3"><path d="M0.2 0.6 H4.4 L2.3 2.8 Z" fill="#6f869c"/></svg>
</body></html>
